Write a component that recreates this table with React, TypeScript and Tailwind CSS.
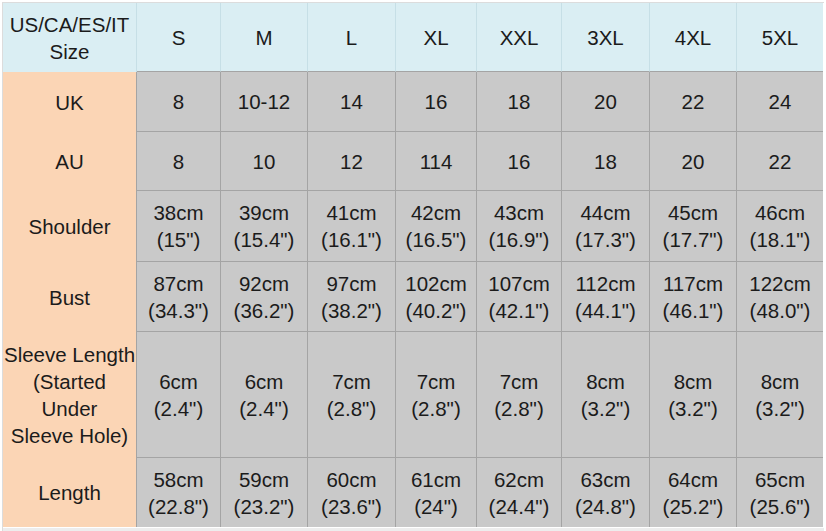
import React from 'react'

const sizes = ["S", "M", "L", "XL", "XXL", "3XL", "4XL", "5XL"]

// cm value plus inch value in brackets
const m = (cm: number, inch: string) => [`${cm}cm`, `(${inch}")`]

const rows: { label: string[]; cells: string[][] }[] = [
    { label: ["UK"], cells: ["8", "10-12", "14", "16", "18", "20", "22", "24"].map(v => [v]) },
    { label: ["AU"], cells: ["8", "10", "12", "114", "16", "18", "20", "22"].map(v => [v]) },
    {
        label: ["Shoulder"],
        cells: [m(38, "15"), m(39, "15.4"), m(41, "16.1"), m(42, "16.5"), m(43, "16.9"), m(44, "17.3"), m(45, "17.7"), m(46, "18.1")],
    },
    {
        label: ["Bust"],
        cells: [m(87, "34.3"), m(92, "36.2"), m(97, "38.2"), m(102, "40.2"), m(107, "42.1"), m(112, "44.1"), m(117, "46.1"), m(122, "48.0")],
    },
    {
        label: ["Sleeve Length", "(Started", "Under", "Sleeve Hole)"],
        cells: [m(6, "2.4"), m(6, "2.4"), m(7, "2.8"), m(7, "2.8"), m(7, "2.8"), m(8, "3.2"), m(8, "3.2"), m(8, "3.2")],
    },
    {
        label: ["Length"],
        cells: [m(58, "22.8"), m(59, "23.2"), m(60, "23.6"), m(61, "24"), m(62, "24.4"), m(63, "24.8"), m(64, "25.2"), m(65, "25.6")],
    },
]

const Lines = ({ lines }: { lines: string[] }) => (
    <div className="flex flex-col items-center text-center">
        {lines.map((l, i) => (
            <span key={i} className="whitespace-nowrap">{l}</span>
        ))}
    </div>
)

const App = () => {
    return (
        <div
            className="w-[826px] h-[531px] bg-white overflow-hidden text-[20.5px] leading-[27px] text-[#1b1b1b]"
            style={{ fontFamily: '"Liberation Sans", Arial, sans-serif' }}
        >
            <div className="mt-[2px] ml-[2px] w-[822px] border-t border-l border-[#dcdcdc]">
                <div className="grid grid-cols-[134px_84px_87px_88px_81px_85px_88px_87px_86px] grid-rows-[69px_60px_59px_71px_70px_126px_69px]">
                    {/* header row */}
                    <div className="bg-[#daeef3] border-r border-[#c6dfe6] flex items-center justify-center">
                        <Lines lines={["US/CA/ES/IT", "Size"]} />
                    </div>
                    {sizes.map((s, i) => (
                        <div
                            key={s}
                            className={
                                "bg-[#daeef3] border-b border-[#a4a4a4] flex items-center justify-center " +
                                (i < sizes.length - 1 ? "border-r border-r-[#c6dfe6]" : "")
                            }
                        >
                            {s}
                        </div>
                    ))}

                    {/* body rows */}
                    {rows.map((row, r) => (
                        <React.Fragment key={r}>
                            <div className="bg-[#fbd5b5] border-r border-[#a4a4a4] flex items-center justify-center">
                                <Lines lines={row.label} />
                            </div>
                            {row.cells.map((c, i) => (
                                <div
                                    key={i}
                                    className={
                                        "bg-[#c9c9c9] flex items-center justify-center " +
                                        (i < row.cells.length - 1 ? "border-r border-[#a4a4a4] " : "") +
                                        (r < rows.length - 1 ? "border-b border-b-[#a4a4a4]" : "")
                                    }
                                >
                                    <Lines lines={c} />
                                </div>
                            ))}
                        </React.Fragment>
                    ))}
                </div>
                <div className="h-px bg-white" />
                <div className="h-[4px] bg-[#ededed]" />
            </div>
        </div>
    )
}

export default App
